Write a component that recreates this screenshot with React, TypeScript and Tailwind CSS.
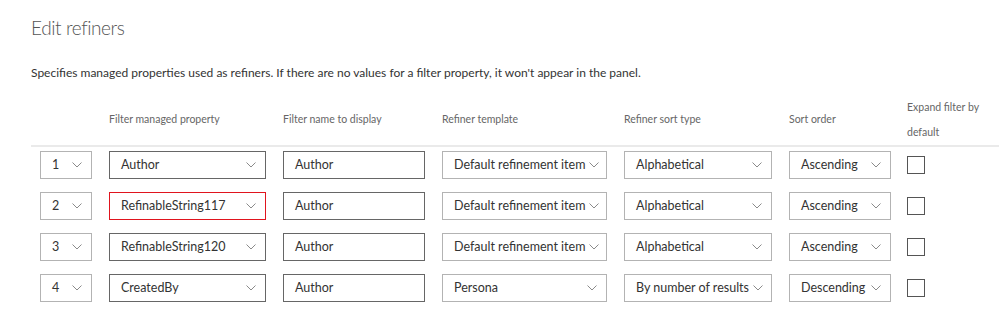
import React from 'react';

type Row = {
  n: number;
  prop: string;
  name: string;
  tpl: string;
  sortType: string;
  order: string;
  invalid?: boolean;
};

const rows: Row[] = [
  { n: 1, prop: 'Author', name: 'Author', tpl: 'Default refinement item', sortType: 'Alphabetical', order: 'Ascending' },
  { n: 2, prop: 'RefinableString117', name: 'Author', tpl: 'Default refinement item', sortType: 'Alphabetical', order: 'Ascending', invalid: true },
  { n: 3, prop: 'RefinableString120', name: 'Author', tpl: 'Default refinement item', sortType: 'Alphabetical', order: 'Ascending' },
  { n: 4, prop: 'CreatedBy', name: 'Author', tpl: 'Persona', sortType: 'By number of results', order: 'Descending' },
];

const Chevron = () => (
  <svg width="10" height="6" viewBox="0 0 10 6" className="shrink-0">
    <path d="M0.5 0.5 L5 5 L9.5 0.5" fill="none" stroke="#8a8a8a" strokeWidth="1" />
  </svg>
);

const Dropdown = ({ value, border }: { value: string | number; border: string }) => (
  <div className={`h-[28px] flex items-center justify-between gap-1 pl-[11px] pr-[9px] border bg-white ${border}`}>
    <span className="whitespace-nowrap text-[12.5px] text-[#333]">{value}</span>
    <Chevron />
  </div>
);

const App = () => {
  return (
    <div className="w-[999px] h-[310px] bg-white overflow-hidden text-[#333]" style={{ fontFamily: 'Lato, "Open Sans", sans-serif' }}>
      <div className="pl-[31px]">
        {/* Title */}
        <h1 className="pt-[14px] h-[42px] leading-[28px] text-[19px] font-light tracking-[-0.4px] text-[#555]">Edit refiners</h1>
        <p className="mt-[21px] leading-[20px] text-[12px] text-[#333]">
          Specifies managed properties used as refiners. If there are no values for a filter property, it won't appear in the panel.
        </p>
      </div>

      {/* Table */}
      <div className="ml-[31px] mt-[12px]">
        <div className="grid grid-cols-[52px_157px_142px_165px_148px_102px_90px] gap-x-[17px] items-center pl-[9px] border-b-2 border-[#eaeaea] text-[10.5px] text-[#666]">
          <div />
          <div>Filter managed property</div>
          <div>Filter name to display</div>
          <div>Refiner template</div>
          <div>Refiner sort type</div>
          <div>Sort order</div>
          <div className="leading-[25px] -ml-px">Expand filter by<br />default</div>
        </div>

        <div className="flex flex-col gap-[13px] pt-[4px] pl-[9px]">
          {rows.map((r) => (
            <div key={r.n} className="grid grid-cols-[52px_157px_142px_165px_148px_102px_18px] gap-x-[17px] items-center">
              <Dropdown value={r.n} border="border-[#b3b3b3]" />
              <Dropdown value={r.prop} border={r.invalid ? 'border-[#e0141e]' : 'border-[#666]'} />
              <div className="h-[28px] flex items-center pl-[11px] border border-[#666] text-[12.5px] text-[#333]">{r.name}</div>
              <Dropdown value={r.tpl} border="border-[#b3b3b3]" />
              <Dropdown value={r.sortType} border="border-[#b3b3b3]" />
              <Dropdown value={r.order} border="border-[#b3b3b3]" />
              <div className="w-[18px] h-[18px] border border-[#555] bg-white -ml-px" />
            </div>
          ))}
        </div>
      </div>
    </div>
  );
};

export default App;
